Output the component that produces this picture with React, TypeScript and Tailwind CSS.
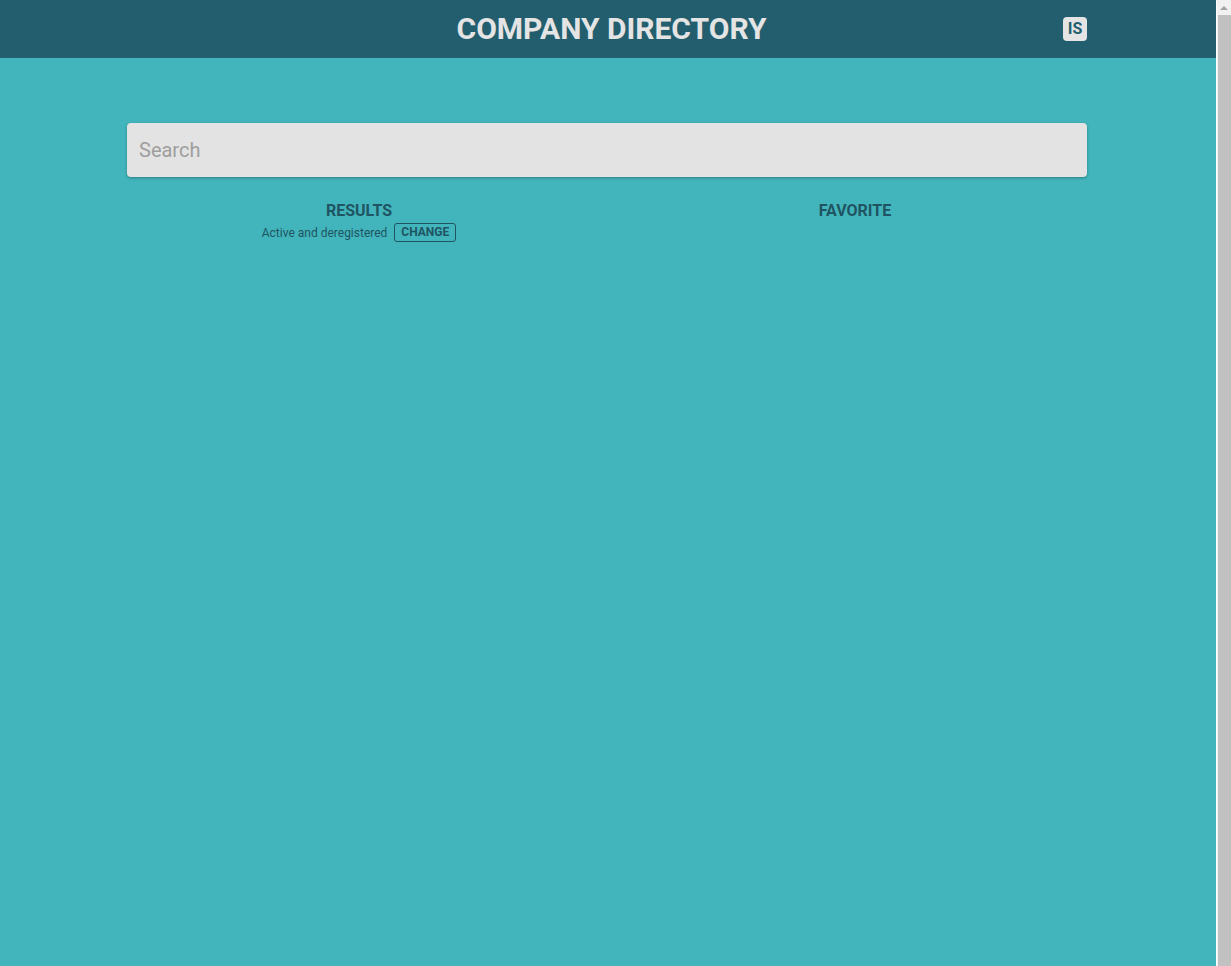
export default function App() {
  return (
    <div
      className="flex h-screen overflow-hidden bg-[#42b5bc]"
      style={{ fontFamily: "Roboto, 'Liberation Sans', sans-serif" }}
    >
      <div className="flex-1">
        {/* Header */}
        <header className="h-[58px] bg-[#235e6e]">
          <div className="relative mx-auto flex h-full w-[960px] items-center justify-center">
            <h1 className="ml-[7px] text-[30px] font-bold leading-none text-[#e4e4e4]">
              COMPANY DIRECTORY
            </h1>
            <button className="absolute right-[1px] top-[17px] flex h-[24px] w-[24px] items-center justify-center rounded-[4px] bg-[#e4e4e4] text-[16px] font-bold text-[#235e6e]">
              IS
            </button>
          </div>
        </header>

        <main className="mx-auto w-[960px] -translate-x-[1px] pt-[65px]">
          <input
            type="text"
            placeholder="Search"
            className="h-[54px] w-full rounded-[4px] bg-[#e3e3e3] px-3 text-[20px] text-[#333] shadow-[0_1px_3px_rgba(0,0,0,0.3)] outline-none placeholder:text-[#9e9e9e]"
          />

          <div className="mt-[24px] grid grid-cols-2 gap-8 text-[#1f5462]">
            <div className="flex flex-col items-center">
              <h2 className="text-[16px] font-bold leading-[20px]">RESULTS</h2>
              <div className="mt-[2px] flex items-center gap-[7px]">
                <span className="text-[12px]">Active and deregistered</span>
                <button className="rounded-[3px] border border-[#1f5462] px-[6px] py-[2px] text-[12px] font-bold leading-[13px]">
                  CHANGE
                </button>
              </div>
            </div>
            <div className="flex flex-col items-center">
              <h2 className="text-[16px] font-bold leading-[20px]">FAVORITE</h2>
            </div>
          </div>
        </main>
      </div>

      {/* scrollbar */}
      <div className="flex w-[15px] flex-col border-l border-[#ffffff] bg-[#f1f1f1]">
        <div className="flex h-[15px] items-center justify-center">
          <div className="h-0 w-0 border-x-[4px] border-b-[4px] border-x-transparent border-b-[#a3a3a3]" />
        </div>
        <div className="ml-[1px] flex-1 bg-[#c1c1c1]" />
      </div>
    </div>
  );
}
